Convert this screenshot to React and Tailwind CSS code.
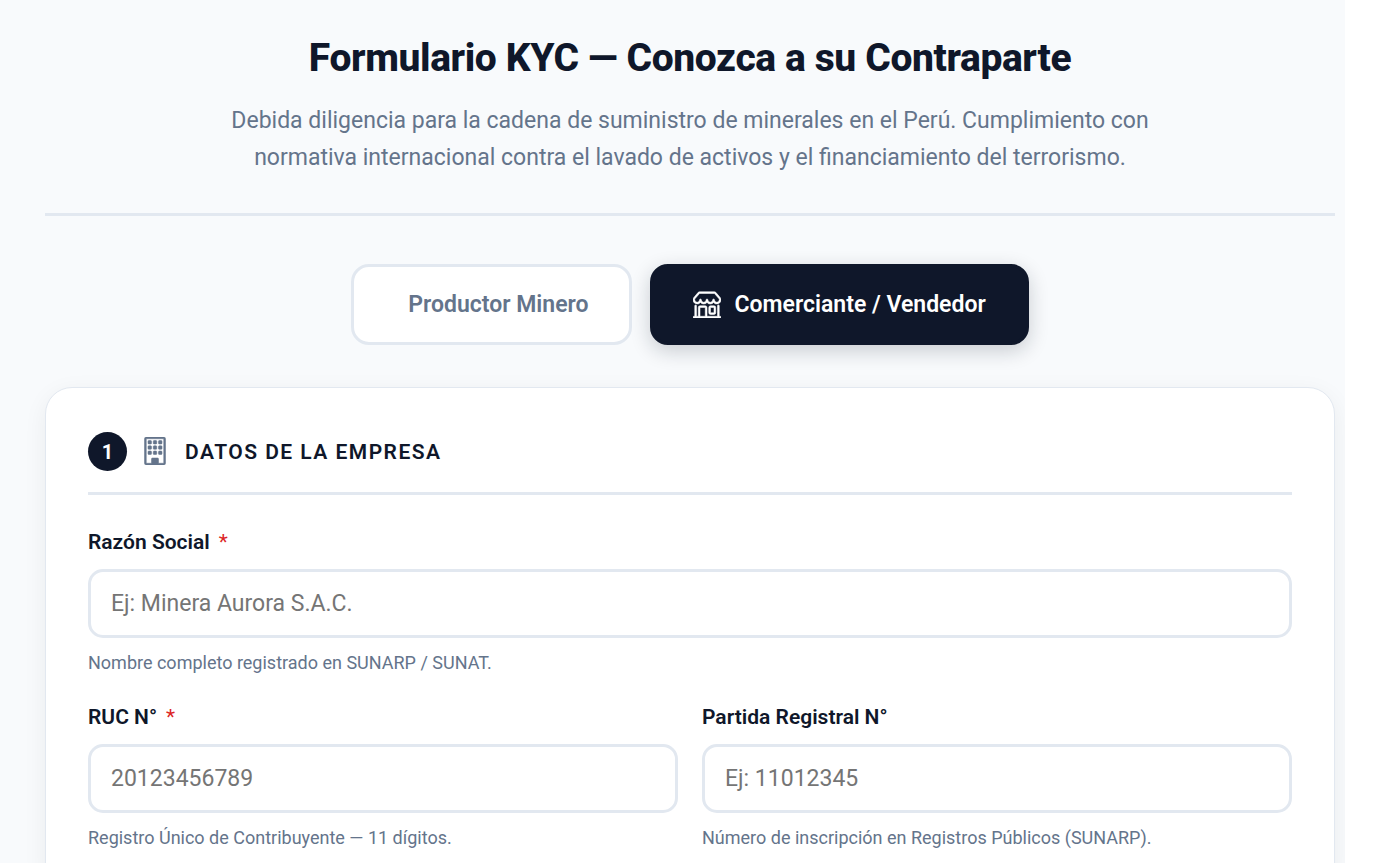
import { useState } from 'react';
import { BsBuilding, BsShop } from 'react-icons/bs';

const tabs = [
  { id: 'productor', label: 'Productor Minero', icon: null },
  { id: 'comerciante', label: 'Comerciante / Vendedor', icon: BsShop },
];

function Tab({ tab, active, onSelect }) {
  const Icon = tab.icon;

  return (
    <button
      type="button"
      aria-pressed={active}
      onClick={() => onSelect(tab.id)}
      className={`flex h-[81px] cursor-pointer items-center gap-[14px] rounded-[18px] border-3 px-10 text-[23px] font-semibold ${
        active
          ? 'border-[#0f172a] bg-[#0f172a] text-white shadow-[0_6px_20px_rgba(15,23,42,0.2)]'
          : 'border-[#e2e8f0] bg-white text-[#64748b]'
      }`}
    >
      {Icon ? <Icon strokeWidth={0.3} className="mb-0.5 size-7" /> : <span className="w-0" />}
      <span className="pt-px">{tab.label}</span>
    </button>
  );
}

function Field({ id, label, placeholder, hint, required = false }) {
  return (
    <div className="flex flex-col">
      <label htmlFor={id} className="text-[21px] leading-8 font-semibold text-[#0f172a]">
        {label}
        {required && <span className="ml-[9px] font-normal text-[#dc2626]">*</span>}
      </label>
      <input
        id={id}
        name={id}
        type="text"
        required={required}
        placeholder={placeholder}
        aria-describedby={`${id}-hint`}
        className="mt-[11px] h-[69px] w-full rounded-[15px] border-3 border-[#e2e8f0] bg-white px-5 text-[23px] text-[#0f172a] shadow-none outline-none placeholder:text-[#757575] focus:border-[#0f172a]"
      />
      <p id={`${id}-hint`} className="mt-[11px] text-[18px] leading-[27px] text-[#64748b]">
        {hint}
      </p>
    </div>
  );
}

export default function App() {
  const [active, setActive] = useState('comerciante');

  return (
    <div className="mr-[46px] h-[calc(100vh-4px)] overflow-hidden bg-[#f8fafc] pr-[10px] pl-[45px] font-[Roboto,sans-serif]">
      <header className="border-b-3 border-[#e2e8f0] pt-[35px] pb-[37px] text-center">
        <h1 className="text-[39px] leading-[47px] font-extrabold tracking-[-0.01em] text-[#0f172a]">
          Formulario KYC — Conozca a su Contraparte
        </h1>
        <p className="mx-auto mt-5 max-w-[960px] text-[23px] leading-[37px] text-[#64748b]">
          Debida diligencia para la cadena de suministro de minerales en el Perú. Cumplimiento con
          normativa internacional contra el lavado de activos y el financiamiento del terrorismo.
        </p>
      </header>

      <div className="mt-12 flex justify-center gap-[18px]">
        {tabs.map((tab) => (
          <Tab key={tab.id} tab={tab} active={active === tab.id} onSelect={setActive} />
        ))}
      </div>

      <form className="mt-[42px] rounded-[27px] border border-[#e2e8f0] bg-white px-[42px] pt-11 pb-[42px] shadow-[0_6px_24px_rgba(15,23,42,0.06)]">
        <div className="flex items-center border-b-3 border-[#e2e8f0] pb-[21px]">
          <span className="grid size-[39px] place-items-center rounded-full bg-[#0f172a] text-[20px] font-bold text-white">
            1
          </span>
          <BsBuilding strokeWidth={0.3} className="mb-0.5 ml-[14px] size-7 text-[#64748b]" />
          <h2 className="ml-4 pt-0.5 text-[21px] font-semibold tracking-[0.07em] text-[#0f172a] uppercase">
            Datos de la empresa
          </h2>
        </div>

        <div className="mt-[31px] grid grid-cols-2 gap-x-6 gap-y-[25px]">
          <div className="col-span-2">
            <Field
              id="razon-social"
              label="Razón Social"
              placeholder="Ej: Minera Aurora S.A.C."
              hint="Nombre completo registrado en SUNARP / SUNAT."
              required
            />
          </div>
          <Field
            id="ruc"
            label="RUC N°"
            placeholder="20123456789"
            hint="Registro Único de Contribuyente — 11 dígitos."
            required
          />
          <Field
            id="partida"
            label="Partida Registral N°"
            placeholder="Ej: 11012345"
            hint="Número de inscripción en Registros Públicos (SUNARP)."
          />
        </div>
      </form>
    </div>
  );
}
